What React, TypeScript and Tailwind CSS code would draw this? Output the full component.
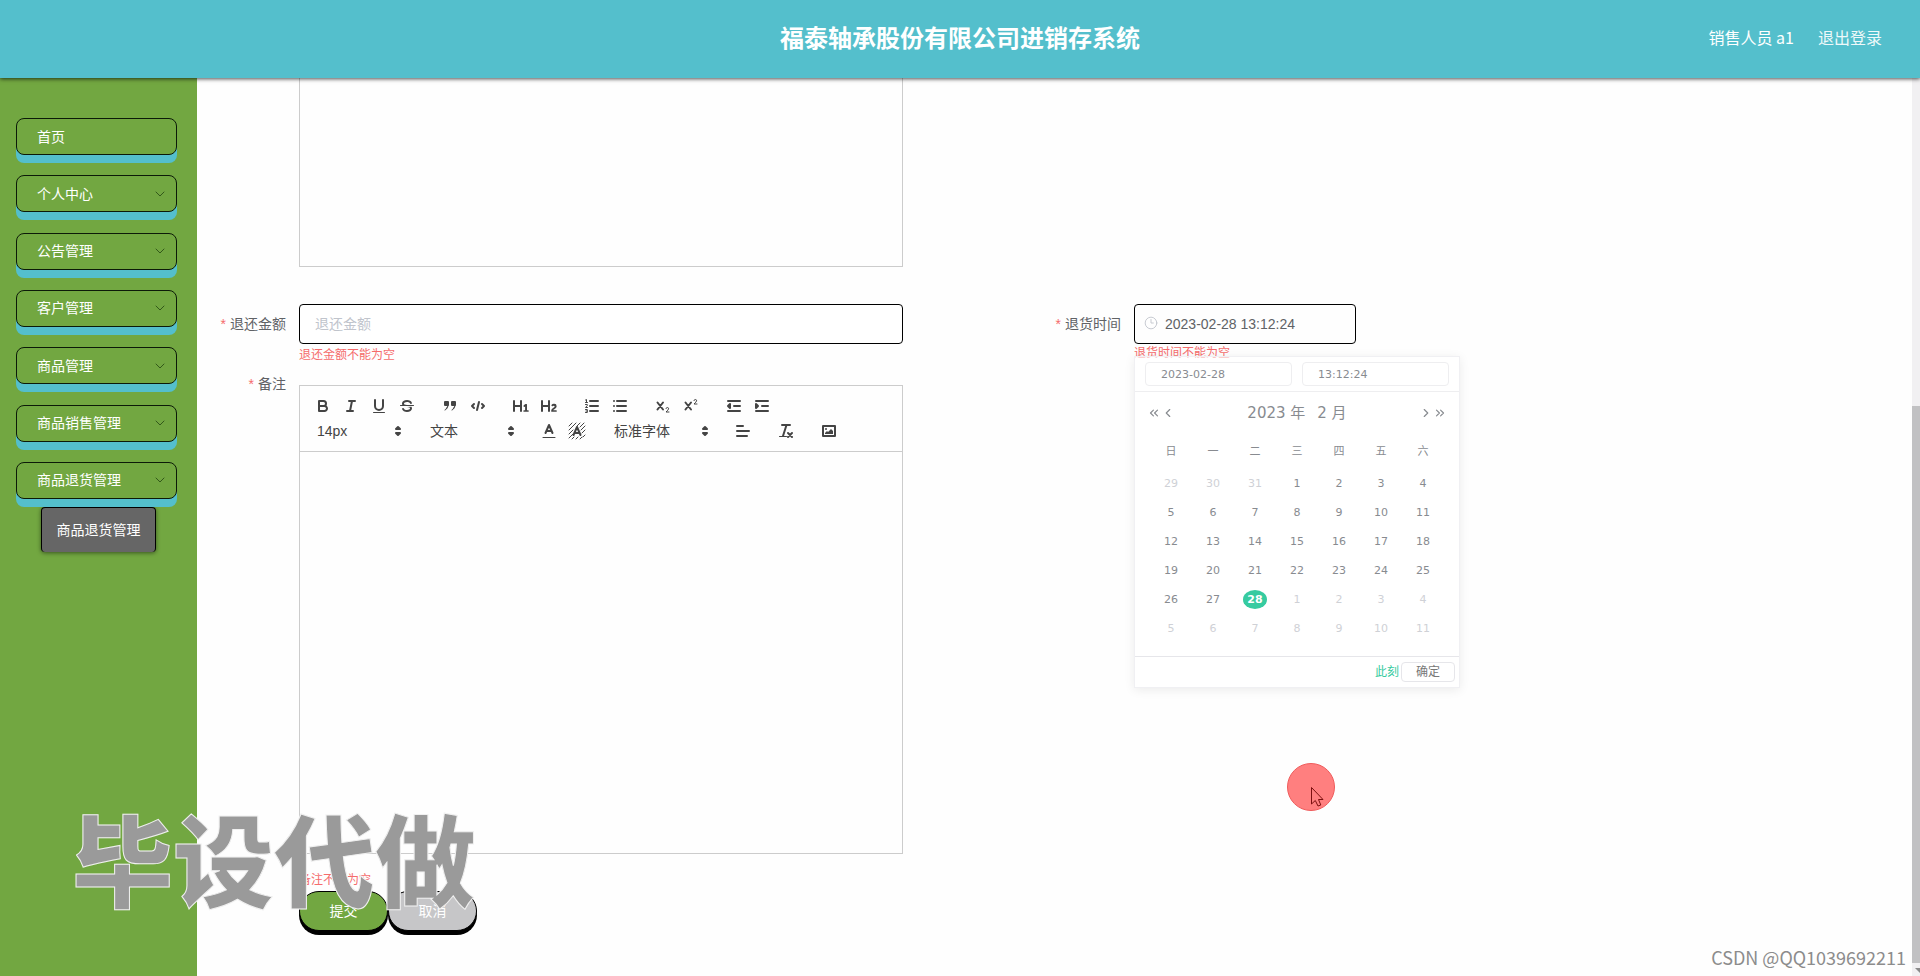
import React from 'react';
import clsx from 'clsx';
import { ChevronDown, ChevronLeft, ChevronRight, ChevronsLeft, ChevronsRight, Clock3 } from 'lucide-react';

const MENU = ['首页', '个人中心', '公告管理', '客户管理', '商品管理', '商品销售管理', '商品退货管理'];

const WEEKDAYS = ['日', '一', '二', '三', '四', '五', '六'];

// February 2023, padded with the end of January and the start of March
const WEEKS = Array.from({ length: 6 }, (_, week) =>
  Array.from({ length: 7 }, (_, day) => {
    const n = week * 7 + day - 2;
    if (n < 1) return { label: 31 + n, other: true };
    if (n > 28) return { label: n - 28, other: true };
    return { label: n, other: false };
  })
);

const ICONS: Record<string, React.ReactNode> = {
  加粗: (
    <>
      <path d="M5,4H9.5A2.5,2.5,0,0,1,12,6.5v0A2.5,2.5,0,0,1,9.5,9H5A0,0,0,0,1,5,9V4A0,0,0,0,1,5,4Z" />
      <path d="M5,9h5.5A2.5,2.5,0,0,1,13,11.5v0A2.5,2.5,0,0,1,10.5,14H5a0,0,0,0,1,0,0V9A0,0,0,0,1,5,9Z" />
    </>
  ),
  斜体: <path d="M7 4H13M5 14H11M8 14L10 4" />,
  下划线: (
    <>
      <path d="M5,3V9a4.012,4.012,0,0,0,4,4H9a4.012,4.012,0,0,0,4-4V3" />
      <rect fill="currentColor" stroke="none" height="1" rx="0.5" ry="0.5" width="12" x="3" y="15" />
    </>
  ),
  删除线: (
    <>
      <path strokeWidth="1" d="M15.5 8.5H2.5" />
      <path
        fill="currentColor"
        stroke="none"
        d="M9.007,8C6.542,7.791,6,7.519,6,6.5,6,5.792,7.283,5,9,5c1.571,0,2.765.679,2.969,1.309a1,1,0,0,0,1.9-.617C13.356,4.106,11.354,3,9,3,6.2,3,4,4.538,4,6.5a3.2,3.2,0,0,0,.5,1.843Z"
      />
      <path
        fill="currentColor"
        stroke="none"
        d="M8.984,10C11.457,10.208,12,10.479,12,11.5c0,0.708-1.283,1.5-3,1.5-1.571,0-2.765-.679-2.969-1.309a1,1,0,1,0-1.9.617C4.644,13.894,6.646,15,9,15c2.8,0,5-1.538,5-3.5a3.2,3.2,0,0,0-.5-1.843Z"
      />
    </>
  ),
  引用: (
    <>
      <rect fill="currentColor" height="3" width="3" x="4" y="5" />
      <rect fill="currentColor" height="3" width="3" x="11" y="5" />
      <path fill="currentColor" strokeWidth="1" d="M7,8c0,4.031-3,5-3,5" />
      <path fill="currentColor" strokeWidth="1" d="M14,8c0,4.031-3,5-3,5" />
    </>
  ),
  代码: <path d="M5 7L3 9L5 11M13 7L15 9L13 11M10 5L8 13" />,
  一级标题: (
    <path
      fill="currentColor"
      stroke="none"
      d="M10,4V14a1,1,0,0,1-2,0V10H3v4a1,1,0,0,1-2,0V4A1,1,0,0,1,3,4V8H8V4a1,1,0,0,1,2,0Zm6.06787,9.209H14.98975V7.59863a.54085.54085,0,0,0-.605-.60547h-.62744a1.01119,1.01119,0,0,0-.748.29688L11.645,8.56641a.5435.5435,0,0,0-.022.8584l.28613.30762a.53861.53861,0,0,0,.84717.0332l.09912-.08789a1.2137,1.2137,0,0,0,.2417-.35254h.02246s-.01123.30859-.01123.60547V13.209H12.041a.54085.54085,0,0,0-.605.60547v.43945a.54085.54085,0,0,0,.605.60547h4.02686a.54085.54085,0,0,0,.605-.60547v-.43945A.54085.54085,0,0,0,16.06787,13.209Z"
    />
  ),
  二级标题: (
    <path
      fill="currentColor"
      stroke="none"
      d="M16.73975,13.81445v.43945a.54085.54085,0,0,1-.605.60547H11.855a.58392.58392,0,0,1-.64893-.60547V14.0127c0-2.90527,3.39941-3.42187,3.39941-4.55469a.77675.77675,0,0,0-.84717-.78125,1.17684,1.17684,0,0,0-.83594.38477c-.2749.26367-.561.374-.85791.13184l-.4292-.34082c-.30811-.24219-.38525-.51758-.1543-.81445a2.97155,2.97155,0,0,1,2.45361-1.17676,2.45393,2.45393,0,0,1,2.68408,2.40918c0,2.45312-3.1792,2.92676-3.27832,3.93848h2.79443A.54085.54085,0,0,1,16.73975,13.81445ZM9,3A.99974.99974,0,0,0,8,4V8H3V4A1,1,0,0,0,1,4V14a1,1,0,0,0,2,0V10H8v4a1,1,0,0,0,2,0V4A.99974.99974,0,0,0,9,3Z"
    />
  ),
  有序列表: (
    <>
      <path d="M7 4H15M7 9H15M7 14H15" />
      <path strokeWidth="1" d="M2.5 5.5H4.5M2.5 3L3.5 2.5V5.5M2.5 7.5H4.3V8.5L2.5 10.5H4.5M2.5 12.5H4.3V15.5H2.5M3 14H4.3" />
    </>
  ),
  无序列表: <path d="M6 4H15M6 9H15M6 14H15M3 4V4.01M3 9V9.01M3 14V14.01" />,
  下标: (
    <>
      <path d="M3.5 5.5L9 12.5M9 5.5L3.5 12.5" />
      <path strokeWidth="1" d="M12 11.5Q12.2 10.5 13.4 10.5Q14.7 10.6 14.6 11.8Q14.3 13 12 15H15" />
    </>
  ),
  上标: (
    <>
      <path d="M3.5 5.5L9 12.5M9 5.5L3.5 12.5" />
      <path strokeWidth="1" d="M12 3.5Q12.2 2.5 13.4 2.5Q14.7 2.6 14.6 3.8Q14.3 5 12 7H15" />
    </>
  ),
  减少缩进: (
    <>
      <path d="M3 14H15M3 4H15M9 9H15" />
      <path fill="currentColor" d="M5 7V11L3 9Z" />
    </>
  ),
  增加缩进: (
    <>
      <path d="M3 14H15M3 4H15M9 9H15" />
      <path fill="currentColor" d="M3 7V11L5 9Z" />
    </>
  ),
  文字颜色: (
    <>
      <path strokeWidth="1" d="M3 15.5H15" />
      <path d="M5.5 11L9 3L12.5 11M11.6 9H6.4" />
    </>
  ),
  背景颜色: (
    <>
      <path
        strokeWidth="1"
        d="M1 4L4 1M1 8L8 1M1 12L5 8M1 16L5 12M9 4L12 1M12 5L16 1M13 8L17 4M14 11L17 8M4 17L6 15M8 17L10 15M12 17L14 15M15 15L17 13"
      />
      <path d="M5.5 13L9 5L12.5 13M11.6 11H6.4" />
    </>
  ),
  对齐方式: <path d="M3 9H15M3 14H13M3 4H9" />,
  清除格式: (
    <>
      <path d="M5 3H13M6 14L9.5 3" />
      <path d="M11 11L15 15M15 11L11 15" />
      <path strokeWidth="1" d="M2.5 14.5H9.5" />
    </>
  ),
  图片: (
    <>
      <rect height="10" width="12" x="3" y="4" />
      <circle fill="currentColor" stroke="none" cx="6" cy="7" r="1" />
      <path fill="currentColor" stroke="none" d="M5 12V11L7 9L8 10L11 7L13 9V12Z" />
    </>
  ),
};

function ToolGroup({ names }: { names: string[] }) {
  return (
    <div className="flex">
      {names.map(name => (
        <button key={name} type="button" aria-label={name} className="w-7 h-[25px] flex items-center justify-center">
          <svg
            width="18"
            height="18"
            viewBox="0 0 18 18"
            fill="none"
            stroke="currentColor"
            strokeWidth="2"
            strokeLinecap="round"
            strokeLinejoin="round"
          >
            {ICONS[name]}
          </svg>
        </button>
      ))}
    </div>
  );
}

function Picker({ label, value, wide }: { label: string; value: string; wide?: boolean }) {
  return (
    <div className={clsx('relative', wide ? 'w-[108px]' : 'w-[98px]')}>
      <select aria-label={label} className="appearance-none w-full h-[25px] pl-2 text-sm bg-transparent outline-none">
        <option>{value}</option>
      </select>
      <svg
        width="18"
        height="18"
        viewBox="0 0 18 18"
        className="absolute right-0 top-1 pointer-events-none"
        fill="currentColor"
        stroke="currentColor"
        strokeWidth="2"
        strokeLinejoin="round"
      >
        <path d="M7 11L9 13L11 11Z" />
        <path d="M7 7L9 5L11 7Z" />
      </svg>
    </div>
  );
}

function Label({ htmlFor, children }: { htmlFor: string; children: React.ReactNode }) {
  return (
    <label
      htmlFor={htmlFor}
      className="block w-[90px] shrink-0 h-10 pr-[13px] text-sm leading-10 text-right text-[#606266] whitespace-nowrap"
    >
      <span className="text-[#f56c6c] mr-1">*</span>
      {children}
    </label>
  );
}

function Sidebar() {
  return (
    <aside className="w-[197px] shrink-0 bg-[#72a741] px-4 pt-10">
      <nav className="w-[161px] h-[381px] flex flex-col justify-between">
        {MENU.map((item, idx) => (
          <a
            key={item}
            href="#"
            className="h-[37px] shrink-0 pl-5 pr-2 flex items-center justify-between rounded-lg border border-[#0c1a08] bg-[#72a741] shadow-[0_8px_0_#54bfcc] text-sm text-white"
          >
            {item}
            {idx > 0 && <ChevronDown size={16} strokeWidth={1.5} className="text-[#33591a]" />}
          </a>
        ))}
      </nav>
      <a
        href="#"
        className="mt-2 mx-auto w-[115px] h-[45px] flex items-center justify-center rounded-sm border-x border-t border-black bg-[#666] shadow-[0_1px_4px_rgba(0,0,0,0.5)] text-sm text-white"
      >
        商品退货管理
      </a>
    </aside>
  );
}

function Editor() {
  return (
    <div className="h-[469px] flex flex-col border border-[#ccc]">
      <div className="h-[66px] shrink-0 pl-[9px] pt-[7px] border-b border-[#ccc] text-[#444]">
        <div className="flex gap-[15px]">
          <ToolGroup names={['加粗', '斜体', '下划线', '删除线']} />
          <ToolGroup names={['引用', '代码']} />
          <ToolGroup names={['一级标题', '二级标题']} />
          <ToolGroup names={['有序列表', '无序列表']} />
          <ToolGroup names={['下标', '上标']} />
          <ToolGroup names={['减少缩进', '增加缩进']} />
        </div>
        <div className="flex gap-[15px]">
          <Picker label="字号" value="14px" />
          <Picker label="段落" value="文本" />
          <ToolGroup names={['文字颜色', '背景颜色']} />
          <Picker label="字体" value="标准字体" wide />
          <ToolGroup names={['对齐方式']} />
          <ToolGroup names={['清除格式']} />
          <ToolGroup names={['图片']} />
        </div>
      </div>
      <textarea id="remark" className="flex-1 p-4 resize-none outline-none" />
    </div>
  );
}

function DatePanel() {
  return (
    <div className="absolute left-0 top-[52px] w-[326px] h-[332px] flex flex-col border border-[#f0f0f3] bg-white/60 shadow-[0_2px_10px_rgba(0,0,0,0.08)] text-[#888b90] font-['DejaVu_Sans','Noto_Sans_CJK_SC',sans-serif]">
      <div className="h-[35px] shrink-0 px-[10px] flex items-center gap-[10px] border-b border-[#eeeef0]">
        <input
          aria-label="日期"
          defaultValue="2023-02-28"
          className="flex-1 min-w-0 h-6 px-[15px] rounded-sm border border-[#eeeef0] text-[11px] outline-none"
        />
        <input
          aria-label="时间"
          defaultValue="13:12:24"
          className="flex-1 min-w-0 h-6 px-[15px] rounded-sm border border-[#eeeef0] text-[11px] outline-none"
        />
      </div>
      <div className="h-[42px] shrink-0 px-3 flex items-center justify-between">
        <div className="flex">
          <button type="button" aria-label="前一年"><ChevronsLeft size={14} strokeWidth={2} /></button>
          <button type="button" aria-label="上个月"><ChevronLeft size={14} strokeWidth={2} /></button>
        </div>
        <div className="flex gap-3 text-[15px] leading-5">
          <span>2023 年</span>
          <span>2 月</span>
        </div>
        <div className="flex">
          <button type="button" aria-label="下个月"><ChevronRight size={14} strokeWidth={2} /></button>
          <button type="button" aria-label="后一年"><ChevronsRight size={14} strokeWidth={2} /></button>
        </div>
      </div>
      <table className="mt-px w-[294px] mx-auto table-fixed text-center text-[11px] leading-4">
        <thead>
          <tr className="h-[34px]">
            {WEEKDAYS.map(day => (
              <th key={day} className="p-0 font-normal">{day}</th>
            ))}
          </tr>
        </thead>
        <tbody>
          {WEEKS.map((week, idx) => (
            <tr key={idx} className="h-[29px]">
              {week.map(({ label, other }, day) => (
                <td key={day} className={clsx('p-0', other && 'text-[#cfd1d6]')}>
                  {label === 28 ? (
                    <span className="mx-auto w-6 h-[19px] flex items-center justify-center rounded-[50%] bg-[#36cba0] font-bold text-white">
                      28
                    </span>
                  ) : (
                    label
                  )}
                </td>
              ))}
            </tr>
          ))}
        </tbody>
      </table>
      <div className="mt-auto h-[31px] shrink-0 pr-1 flex items-center justify-end gap-[2px] border-t border-[#e6e6ea] text-xs leading-4">
        <button type="button" className="text-[#36cba0]">此刻</button>
        <button type="button" className="w-[54px] h-5 rounded-sm border border-[#e6e6ea] text-[#777]">确定</button>
      </div>
    </div>
  );
}

export default function App() {
  return (
    <div className="relative h-screen flex flex-col overflow-hidden bg-[#fefefe] font-['Liberation_Sans','Noto_Sans_CJK_SC',sans-serif]">
      <header className="relative z-10 h-[78px] shrink-0 grid grid-cols-[1fr_auto_1fr] items-center bg-[#54bfcc] px-[38px] pb-1 text-white shadow-[0_1px_4px_rgba(0,0,0,0.7)] font-['Noto_Sans_CJK_SC',sans-serif]">
        <h1 className="col-start-2 text-2xl font-bold">福泰轴承股份有限公司进销存系统</h1>
        <div className="flex justify-end gap-6 text-base">
          <span>销售人员 a1</span>
          <a href="#" className="opacity-90">退出登录</a>
        </div>
      </header>

      <div className="flex-1 min-h-0 flex">
        <Sidebar />

        <main className="flex-1 min-w-0 pl-3">
          <form onSubmit={e => e.preventDefault()}>
            <div className="ml-[90px] w-[604px] h-[189px] border border-t-0 border-[#ccc]" />

            <div className="mt-[37px] flex">
              <Label htmlFor="amount">退还金额</Label>
              <div className="w-[604px] h-[81px]">
                <input
                  id="amount"
                  placeholder="退还金额"
                  className="block w-full h-10 px-[15px] rounded border border-black bg-white text-sm placeholder:text-[#c0c4cc] outline-none"
                />
                <p className="pt-[5px] text-xs leading-3 text-[#f56c6c]">退还金额不能为空</p>
              </div>
              <div className="ml-[141px] flex">
                <Label htmlFor="time">退货时间</Label>
                <div className="relative">
                  <Clock3 size={14} strokeWidth={1.5} className="absolute left-[10px] top-3 text-[#c0c4cc]" />
                  <input
                    id="time"
                    defaultValue="2023-02-28 13:12:24"
                    className="block w-[222px] h-10 pl-[30px] rounded border border-black text-sm text-[#606266] outline-none"
                  />
                  <p className="pt-[3px] text-xs leading-3 text-[#f56c6c]">退货时间不能为空</p>
                  <DatePanel />
                </div>
              </div>
            </div>

            <div className="flex">
              <div className="-mt-[21px] shrink-0">
                <Label htmlFor="remark">备注</Label>
              </div>
              <div className="w-[604px]">
                <Editor />
                <p className="pt-5 text-xs leading-3 text-[#f56c6c]">备注不能为空</p>
                <div className="mt-[5px] flex">
                  <button
                    type="submit"
                    className="w-[89px] h-10 rounded-[20px] border border-black bg-[#72a741] shadow-[0_4px_0_#000] text-sm text-white"
                  >
                    提交
                  </button>
                  <button
                    type="button"
                    className="w-[89px] h-10 rounded-[20px] border border-black bg-[#c6c6c8] shadow-[0_4px_0_#000] text-sm text-white"
                  >
                    取消
                  </button>
                </div>
              </div>
            </div>
          </form>
        </main>

        <div className="w-2 shrink-0 flex flex-col justify-end bg-[#f1f0f2]">
          <div className="h-[557px] bg-[#c1c1c3]" />
          <svg width="8" height="13" viewBox="0 0 8 13" fill="#8a8a8a">
            <path d="M3 5H8V10Z" />
          </svg>
        </div>
      </div>

      {/* overlays */}
      <div className="absolute left-[72px] top-[784px] text-[101px] leading-[144px] font-black text-[#9a9a9a] pointer-events-none [-webkit-text-stroke:1px_#f0f0f0] font-['Noto_Sans_CJK_SC',sans-serif]">
        毕设代做
      </div>
      <div className="absolute right-[14px] bottom-[7px] text-lg leading-6 text-[#8c8c8c] pointer-events-none font-['Noto_Sans_CJK_SC',sans-serif]">
        CSDN @QQ1039692211
      </div>
      <svg width="48" height="48" viewBox="0 0 48 48" className="absolute left-[1287px] top-[763px] pointer-events-none">
        <circle cx="24" cy="24" r="23.5" fill="#ff7f7f" stroke="#ef5b5b" />
        <path d="M24.5 24.5V41L28.300 37.500L31 43L33.800 42L31.500 36.500H36Z" fill="#ff7f7f" stroke="#7c1010" />
      </svg>
    </div>
  );
}
